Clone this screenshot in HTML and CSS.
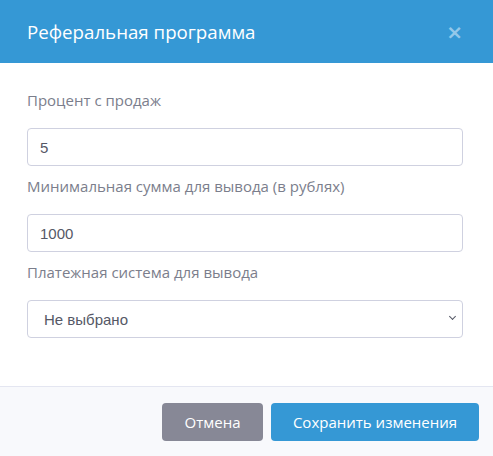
FILE: index.html
```html
<!DOCTYPE html>
<html lang="ru">
<head>
  <meta charset="UTF-8">
  <meta name="viewport" content="width=device-width, initial-scale=1.0">
  <title>Реферальная программа</title>
  <link rel="stylesheet" href="styles.css">
</head>
<body>
  <div class="modal">
    <div class="modal-header">
      <h5 class="modal-title">Реферальная программа</h5>
      <button class="close" type="button">&times;</button>
    </div>
    <div class="modal-body">
      <div class="form-group">
        <label for="percent">Процент с продаж</label>
        <input type="text" id="percent" class="form-control" value="5">
      </div>
      <div class="form-group">
        <label for="min-sum">Минимальная сумма для вывода (в рублях)</label>
        <input type="text" id="min-sum" class="form-control" value="1000">
      </div>
      <div class="form-group">
        <label for="pay-system">Платежная система для вывода</label>
        <div class="select-wrap">
          <select id="pay-system" class="form-control">
            <option>Не выбрано</option>
          </select>
        </div>
      </div>
    </div>
    <div class="modal-footer">
      <button class="btn btn-secondary" type="button">Отмена</button>
      <button class="btn btn-primary" type="button">Сохранить изменения</button>
    </div>
  </div>
</body>
</html>
```

FILE: styles.css
```css
body {
  margin: 0;
  font-family: "Liberation Sans", Arial, sans-serif;
  background: #fff;
}
.modal {
  width: 493px;
  height: 456px;
  display: flex;
  flex-direction: column;
}
.modal-header {
  height: 63px;
  background-color: #3598d5;
  display: flex;
  align-items: center;
  justify-content: space-between;
  padding: 0 30px 0 27px;
  box-sizing: border-box;
}
.modal-title {
  margin: 0;
  font-family: "Open Sans", sans-serif;
  font-size: 18.7px;
  font-weight: 400;
  color: #fff;
}
.close {
  background: none;
  border: none;
  padding: 0;
  font-family: "DejaVu Sans", sans-serif;
  font-size: 20px;
  font-weight: bold;
  color: #93c8ea;
  cursor: pointer;
}
.modal-body {
  flex: 1;
  padding: 27px 30px 0 27px;
}
.form-group {
  margin-bottom: 10px;
}
.form-group label {
  display: block;
  font-family: "Open Sans", sans-serif;
  font-size: 15px;
  line-height: 20px;
  color: #7b7e8c;
  margin-bottom: 18px;
}
.form-control {
  display: block;
  width: 100%;
  height: 38px;
  box-sizing: border-box;
  padding: 0 12px;
  border: 1px solid #cfd1e0;
  border-radius: 4px;
  font-family: "Liberation Sans", Arial, sans-serif;
  font-size: 15px;
  color: #555866;
  background: #fff;
}
.select-wrap {
  position: relative;
}
.select-wrap select {
  appearance: none;
  -webkit-appearance: none;
  padding-left: 16px;
}
/* small chevron on the right of the select */
.select-wrap::after {
  content: "";
  position: absolute;
  right: 8px;
  top: 14px;
  width: 4px;
  height: 4px;
  border-right: 1.5px solid #555866;
  border-bottom: 1.5px solid #555866;
  transform: rotate(45deg);
  pointer-events: none;
}
.modal-footer {
  height: 70px;
  box-sizing: border-box;
  border-top: 1px solid #e4e6f1;
  background-color: #f8f9fc;
  display: flex;
  justify-content: flex-end;
  align-items: center;
  gap: 8px;
  padding: 0 14px 0 0;
}
.btn {
  height: 38px;
  border: none;
  border-radius: 4px;
  font-family: "Open Sans", sans-serif;
  font-size: 15px;
  color: #fff;
  cursor: pointer;
}
.btn-secondary {
  width: 101px;
  background-color: #878896;
}
.btn-primary {
  width: 208px;
  background-color: #3598d5;
}
```
